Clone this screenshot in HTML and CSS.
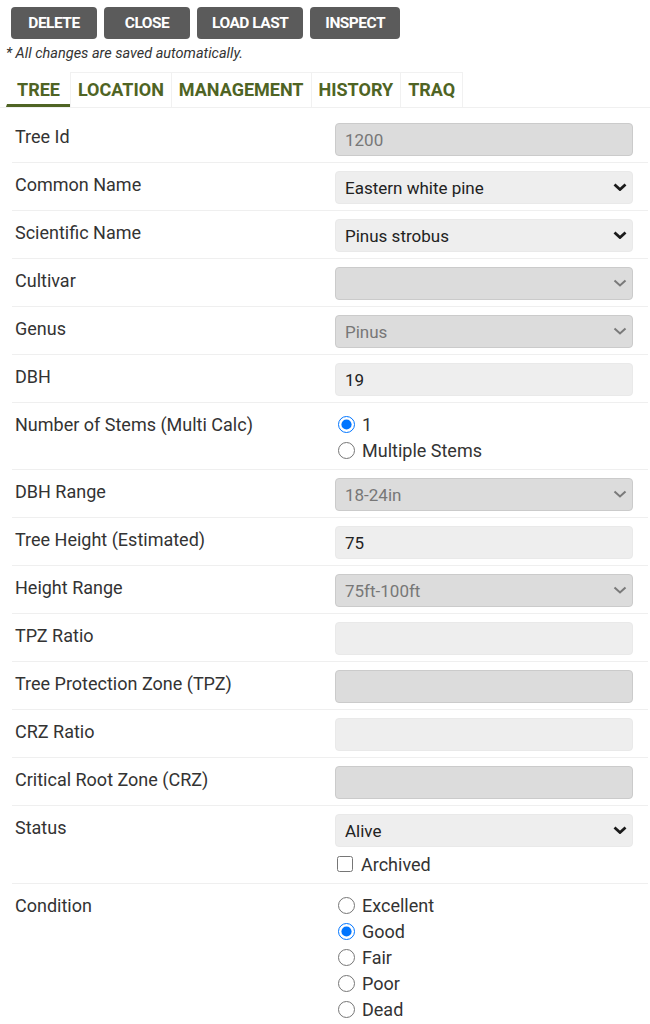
FILE: index.html
```html
<!DOCTYPE html>
<html>
<head>
<meta charset="utf-8">
<link rel="stylesheet" href="styles.css">
</head>
<body>
<div class="toolbar">
  <button class="btn">DELETE</button>
  <button class="btn">CLOSE</button>
  <button class="btn">LOAD LAST</button>
  <button class="btn">INSPECT</button>
</div>
<div class="note">* All changes are saved automatically.</div>
<div class="tabs">
  <div class="tab active">TREE</div>
  <div class="tab">LOCATION</div>
  <div class="tab">MANAGEMENT</div>
  <div class="tab">HISTORY</div>
  <div class="tab">TRAQ</div>
</div>
<div class="form">
  <div class="row">
    <div class="label">Tree Id</div>
    <div class="field"><input class="ctl dis" value="1200" disabled></div>
  </div>
  <div class="row">
    <div class="label">Common Name</div>
    <div class="field"><div class="sel"><select class="ctl"><option>Eastern white pine</option></select><svg class="chev" viewBox="0 0 14 8"><path d="M1.5 1.5 L7 6.5 L12.5 1.5"/></svg></div></div>
  </div>
  <div class="row">
    <div class="label">Scientific Name</div>
    <div class="field"><div class="sel"><select class="ctl"><option>Pinus strobus</option></select><svg class="chev" viewBox="0 0 14 8"><path d="M1.5 1.5 L7 6.5 L12.5 1.5"/></svg></div></div>
  </div>
  <div class="row">
    <div class="label">Cultivar</div>
    <div class="field"><div class="sel"><select class="ctl dis" disabled><option></option></select><svg class="chev off" viewBox="0 0 14 8"><path d="M1.5 1.5 L7 6.5 L12.5 1.5"/></svg></div></div>
  </div>
  <div class="row">
    <div class="label">Genus</div>
    <div class="field"><div class="sel"><select class="ctl dis" disabled><option>Pinus</option></select><svg class="chev off" viewBox="0 0 14 8"><path d="M1.5 1.5 L7 6.5 L12.5 1.5"/></svg></div></div>
  </div>
  <div class="row">
    <div class="label">DBH</div>
    <div class="field"><input class="ctl" value="19"></div>
  </div>
  <div class="row">
    <div class="label">Number of Stems (Multi Calc)</div>
    <div class="field">
      <label class="opt"><input type="radio" name="stems" checked><span>1</span></label>
      <label class="opt"><input type="radio" name="stems"><span>Multiple Stems</span></label>
    </div>
  </div>
  <div class="row">
    <div class="label">DBH Range</div>
    <div class="field"><div class="sel"><select class="ctl dis" disabled><option>18-24in</option></select><svg class="chev off" viewBox="0 0 14 8"><path d="M1.5 1.5 L7 6.5 L12.5 1.5"/></svg></div></div>
  </div>
  <div class="row">
    <div class="label">Tree Height (Estimated)</div>
    <div class="field"><input class="ctl" value="75"></div>
  </div>
  <div class="row">
    <div class="label">Height Range</div>
    <div class="field"><div class="sel"><select class="ctl dis" disabled><option>75ft-100ft</option></select><svg class="chev off" viewBox="0 0 14 8"><path d="M1.5 1.5 L7 6.5 L12.5 1.5"/></svg></div></div>
  </div>
  <div class="row">
    <div class="label">TPZ Ratio</div>
    <div class="field"><input class="ctl" value=""></div>
  </div>
  <div class="row">
    <div class="label">Tree Protection Zone (TPZ)</div>
    <div class="field"><input class="ctl dis" value="" disabled></div>
  </div>
  <div class="row">
    <div class="label">CRZ Ratio</div>
    <div class="field"><input class="ctl" value=""></div>
  </div>
  <div class="row">
    <div class="label">Critical Root Zone (CRZ)</div>
    <div class="field"><input class="ctl dis" value="" disabled></div>
  </div>
  <div class="row">
    <div class="label">Status</div>
    <div class="field">
      <div class="sel"><select class="ctl"><option>Alive</option></select><svg class="chev" viewBox="0 0 14 8"><path d="M1.5 1.5 L7 6.5 L12.5 1.5"/></svg></div>
      <label class="opt check"><input type="checkbox"><span>Archived</span></label>
    </div>
  </div>
  <div class="row last">
    <div class="label">Condition</div>
    <div class="field">
      <label class="opt"><input type="radio" name="cond"><span>Excellent</span></label>
      <label class="opt"><input type="radio" name="cond" checked><span>Good</span></label>
      <label class="opt"><input type="radio" name="cond"><span>Fair</span></label>
      <label class="opt"><input type="radio" name="cond"><span>Poor</span></label>
      <label class="opt"><input type="radio" name="cond"><span>Dead</span></label>
    </div>
  </div>
</div>
</body>
</html>
```
FILE: styles.css
```css
* { box-sizing: border-box; }
body {
  margin: 0;
  background: #fff;
  font-family: Roboto, "Liberation Sans", sans-serif;
  color: #333;
}
.toolbar {
  display: flex;
  gap: 7px;
  padding: 7px 0 0 11px;
}
.btn {
  height: 32px;
  min-width: 86px;
  padding: 0 15px;
  border: none;
  border-radius: 4px;
  background: #5b5b5b;
  color: #fff;
  font-family: Roboto, "Liberation Sans", sans-serif;
  font-weight: 700;
  font-size: 15.5px;
  letter-spacing: -0.5px;
}
.note {
  padding: 6px 0 0 6px;
  font-size: 14.5px;
  line-height: 17px;
  font-style: italic;
  color: #333;
}
.tabs {
  display: flex;
  margin-top: 10px;
  padding-left: 6px;
  border-bottom: 1px solid #f0f0f0;
}
.tab {
  height: 35px;
  line-height: 33px;
  padding: 0 7px;
  font-weight: 700;
  font-size: 18px;
  color: #4f6424;
  border: 1px solid #f1f1f1;
  border-bottom: none;
  margin-right: -1px;
}
.tab.active {
  padding: 0 10px;
  border-color: transparent;
  border-bottom: 3px solid #4f6424;
}
.form {
  padding: 7px 2px 0 12px;
}
.row {
  display: grid;
  grid-template-columns: 320px 298px;
  padding: 8px 0 6px 3px;
  border-bottom: 1px solid #efefef;
}
.row.last {
  border-bottom: none;
}
.label {
  font-size: 18px;
  line-height: 28px;
  color: #333;
}
.field {
  display: flex;
  flex-direction: column;
}
.sel {
  position: relative;
  width: 298px;
  height: 33px;
}
.chev {
  position: absolute;
  right: 6px;
  top: 12px;
  width: 14px;
  height: 8px;
  fill: none;
  stroke: #1a1a1a;
  stroke-width: 2.8;
  pointer-events: none;
}
.chev.off {
  stroke: #7a7a7a;
  stroke-width: 2;
}
.ctl {
  width: 298px;
  height: 33px;
  padding: 0 9px;
  border: 1px solid #e9e9e9;
  border-radius: 4px;
  background-color: #eeeeee;
  font-family: Roboto, "Liberation Sans", sans-serif;
  font-size: 17px;
  color: #222;
  outline: none;
  appearance: none;
  -webkit-appearance: none;
}
.ctl.dis {
  background-color: #dcdcdc;
  border-color: #cbcbcb;
  color: #777;
  opacity: 1;
}
.opt {
  display: flex;
  align-items: center;
  height: 26px;
  font-size: 18px;
  color: #333;
}
.opt input {
  width: 17px;
  height: 17px;
  margin: 0 7px 0 3px;
  accent-color: #0075ff;
}
.check {
  margin-top: 4px;
}
.check input {
  width: 16px;
  height: 16px;
  margin: 0 8px 0 2px;
}
```
